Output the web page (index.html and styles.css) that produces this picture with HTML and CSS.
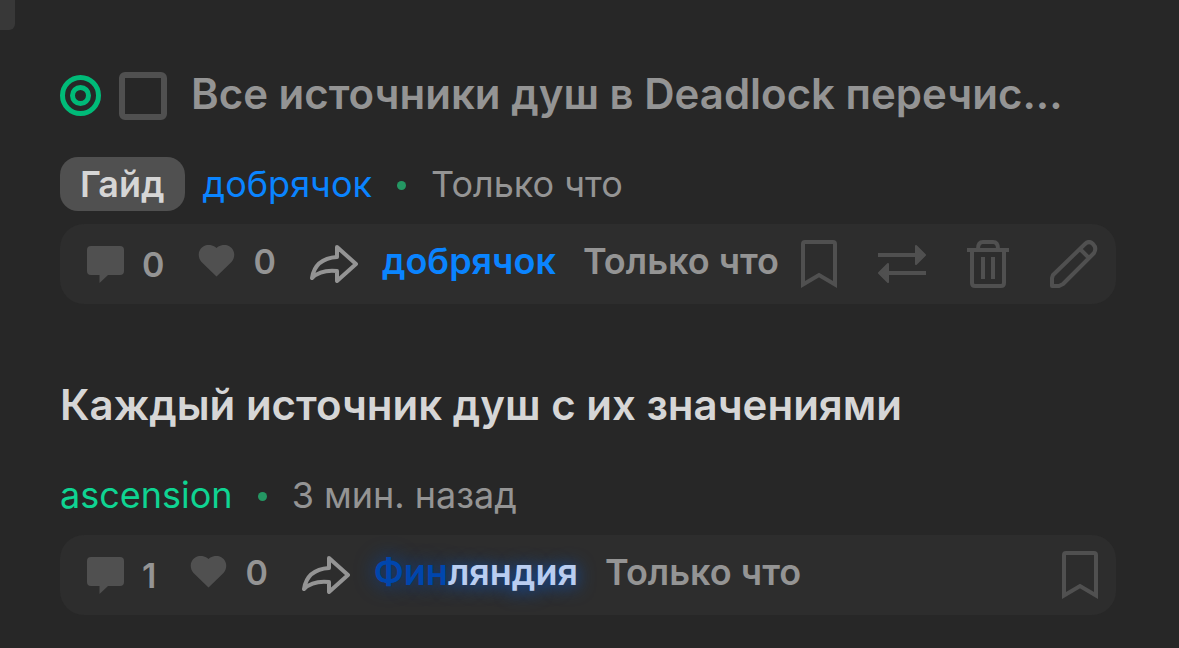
FILE: index.html
```html
<!DOCTYPE html>
<html lang="ru">
<head>
	<meta charset="UTF-8">
	<meta name="viewport" content="width=device-width, initial-scale=1.0">
	<title>Темы</title>
	<link rel="stylesheet" href="styles.css">
</head>
<body>
	<svg class="sprite" aria-hidden="true">
		<symbol id="i-comment" viewBox="0 0 37 37"><path fill="currentColor" d="M4 0h29q4 0 4 4v21q0 4-4 4H21l-8.500 8v-8H4q-4 0-4-4V4q0-4 4-4z"/></symbol>
		<symbol id="i-heart" viewBox="0 0 37 32"><path fill="currentColor" d="M18.500 31.500 3.500 17C-5 6 8-6 18.500 3 29-6 42 6 33.500 17z"/></symbol>
		<symbol id="i-share" viewBox="0 0 48 38"><path fill="none" stroke="currentColor" stroke-width="4" stroke-linejoin="round" d="M27 2 46 19 27 36V26C17 25 8 27 2 33 4 20 13 13 27 12z"/></symbol>
		<symbol id="i-bookmark" viewBox="0 0 36 48"><path fill="none" stroke="currentColor" stroke-width="4" d="M2 44.500V4q0-2 2-2h28q2 0 2 2v40.500L18 35z"/></symbol>
		<symbol id="i-swap" viewBox="0 0 48 40"><path fill="none" stroke="currentColor" stroke-width="4" d="M0 11h40M8 29h40"/><path fill="currentColor" stroke="currentColor" stroke-width="2" stroke-linejoin="round" d="M38 2 47 11 38 20zM10 20 1 29 10 38z"/></symbol>
		<symbol id="i-trash" viewBox="0 0 42 48"><path fill="none" stroke="currentColor" stroke-width="4" d="M0 10h42M11 9q0-7 5-7h10q5 0 5 7M5 10v33q0 3 3 3h26q3 0 3-3V10M16 17v22M26 17v22"/></symbol>
		<symbol id="i-pencil" viewBox="0 0 48 48"><path fill="none" stroke="currentColor" stroke-width="4" stroke-linejoin="round" d="M3 35 35 4q4-4 8 0t1 9L13 44 9 46H2V38zM30 9l9 9"/></symbol>
	</svg>

	<div class="corner"></div>

	<main class="list">
		<article class="post">
			<div class="title-row">
				<svg class="target" viewBox="0 0 41 41" aria-hidden="true"><circle cx="20.500" cy="20.500" r="18"/><circle cx="20.500" cy="20.500" r="8"/></svg>
				<input class="check" type="checkbox" aria-label="Выбрать тему">
				<h2 class="title title-read">Все источники душ в Deadlock перечис...</h2>
			</div>
			<div class="meta">
				<span class="tag">Гайд</span>
				<a class="author blue" href="#">добрячок</a>
				<span class="dot"></span>
				<span class="time">Только что</span>
			</div>
			<div class="bar">
				<button class="stat comments" aria-label="Комментарии"><svg class="icon-comment"><use href="#i-comment"/></svg><span>0</span></button>
				<button class="stat" aria-label="Нравится"><svg class="icon-heart"><use href="#i-heart"/></svg><span>0</span></button>
				<a class="last" href="#"><svg class="icon-share" aria-hidden="true"><use href="#i-share"/></svg><span class="last-name blue">добрячок</span></a>
				<span class="last-time">Только что</span>
				<div class="actions">
					<button aria-label="В закладки"><svg class="icon-bookmark"><use href="#i-bookmark"/></svg></button>
					<button aria-label="Переместить"><svg class="icon-swap"><use href="#i-swap"/></svg></button>
					<button aria-label="Удалить"><svg class="icon-trash"><use href="#i-trash"/></svg></button>
					<button aria-label="Изменить"><svg class="icon-pencil"><use href="#i-pencil"/></svg></button>
				</div>
			</div>
		</article>

		<article class="post">
			<div class="title-row">
				<h2 class="title">Каждый источник душ с их значениями</h2>
			</div>
			<div class="meta">
				<a class="author green" href="#">ascension</a>
				<span class="dot"></span>
				<span class="time">3 мин. назад</span>
			</div>
			<div class="bar">
				<button class="stat comments" aria-label="Комментарии"><svg class="icon-comment"><use href="#i-comment"/></svg><span>1</span></button>
				<button class="stat" aria-label="Нравится"><svg class="icon-heart"><use href="#i-heart"/></svg><span>0</span></button>
				<a class="last" href="#"><svg class="icon-share" aria-hidden="true"><use href="#i-share"/></svg><span class="last-name"><span class="fin-blue">Фин</span><span class="fin-white">ляндия</span></span></a>
				<span class="last-time">Только что</span>
				<div class="actions">
					<button aria-label="В закладки"><svg class="icon-bookmark"><use href="#i-bookmark"/></svg></button>
				</div>
			</div>
		</article>
	</main>
</body>
</html>
```
FILE: styles.css
```css
* {
	box-sizing: border-box;
}
body {
	margin: 0;
	background: #272727;
	color: #949494;
	font-family: Inter, "Open Sans", sans-serif;
}
a {
	text-decoration: none;
}
button {
	padding: 0;
	border: 0;
	background: none;
	color: inherit;
	font: inherit;
	cursor: pointer;
}
svg {
	display: block;
	flex-shrink: 0;
}
.sprite {
	position: absolute;
	width: 0;
	height: 0;
}
.corner {
	position: absolute;
	top: 0;
	left: 0;
	width: 15px;
	height: 30px;
	background: #383838;
	border-bottom-right-radius: 6px;
}
.list {
	display: flex;
	flex-direction: column;
	gap: 79px;
	padding: 72px 63px 32px 60px;
}
.title-row {
	display: flex;
	align-items: center;
	height: 48px;
	margin-bottom: 37px;
}
.target {
	width: 41px;
	height: 41px;
	margin: 0 18px 2px 0;
	fill: none;
	stroke: #00ba78;
	stroke-width: 5;
}
.check {
	appearance: none;
	flex-shrink: 0;
	width: 48px;
	height: 48px;
	margin: 0 24px 0 0;
	border: 6px solid #505050;
	border-radius: 6px;
}
.title {
	margin: 0 0 4px;
	font-size: 42px;
	font-weight: 600;
	line-height: 48px;
	color: #d6d6d6;
	white-space: nowrap;
}
.title-read {
	color: #949494;
}
.meta {
	display: flex;
	align-items: center;
	height: 54px;
	margin-bottom: 13px;
	font-size: 36px;
}
.tag {
	margin-right: 18px;
	padding: 0 20px;
	border-radius: 18px;
	background: #505050;
	color: #d6d6d6;
	font-size: 36px;
	font-weight: 600;
	line-height: 54px;
}
.dot {
	width: 9px;
	height: 9px;
	margin: 2px 25px 0;
	border-radius: 50%;
	background: #249763;
}
.blue {
	color: #0a84ff;
}
.green {
	color: #0fd492;
}
.bar {
	display: flex;
	align-items: center;
	height: 80px;
	padding: 0 18px 0 27px;
	border-radius: 24px;
	background: #2d2d2d;
	font-size: 36px;
	font-weight: 600;
	white-space: nowrap;
}
.stat {
	display: flex;
	align-items: center;
	gap: 18px;
	height: 80px;
	margin-right: 34px;
	padding-bottom: 6px;
	font-size: 34px;
}
.comments {
	padding-bottom: 0;
}
.icon-comment {
	width: 37px;
	height: 37px;
	color: #505050;
}
.icon-heart {
	width: 37px;
	height: 32px;
	color: #505050;
}
.last {
	display: flex;
	align-items: center;
	gap: 24px;
}
.last-name,
.last-time {
	padding-bottom: 6px;
}
.icon-share {
	width: 48px;
	height: 38px;
	color: #949494;
}
.last-time {
	margin-left: 27px;
}
.fin-blue {
	color: #0046ad;
	text-shadow: 0 0 20px #0b4294;
}
.fin-white {
	color: #b9cdf0;
	text-shadow: 0 2px 18px #0b58c8;
}
.actions {
	display: flex;
	align-items: center;
	gap: 41px;
	margin-left: auto;
	color: #505050;
}
.icon-bookmark {
	width: 36px;
	height: 48px;
}
.icon-swap {
	width: 48px;
	height: 40px;
}
.icon-trash {
	width: 42px;
	height: 48px;
}
.icon-pencil {
	width: 48px;
	height: 48px;
}
```
